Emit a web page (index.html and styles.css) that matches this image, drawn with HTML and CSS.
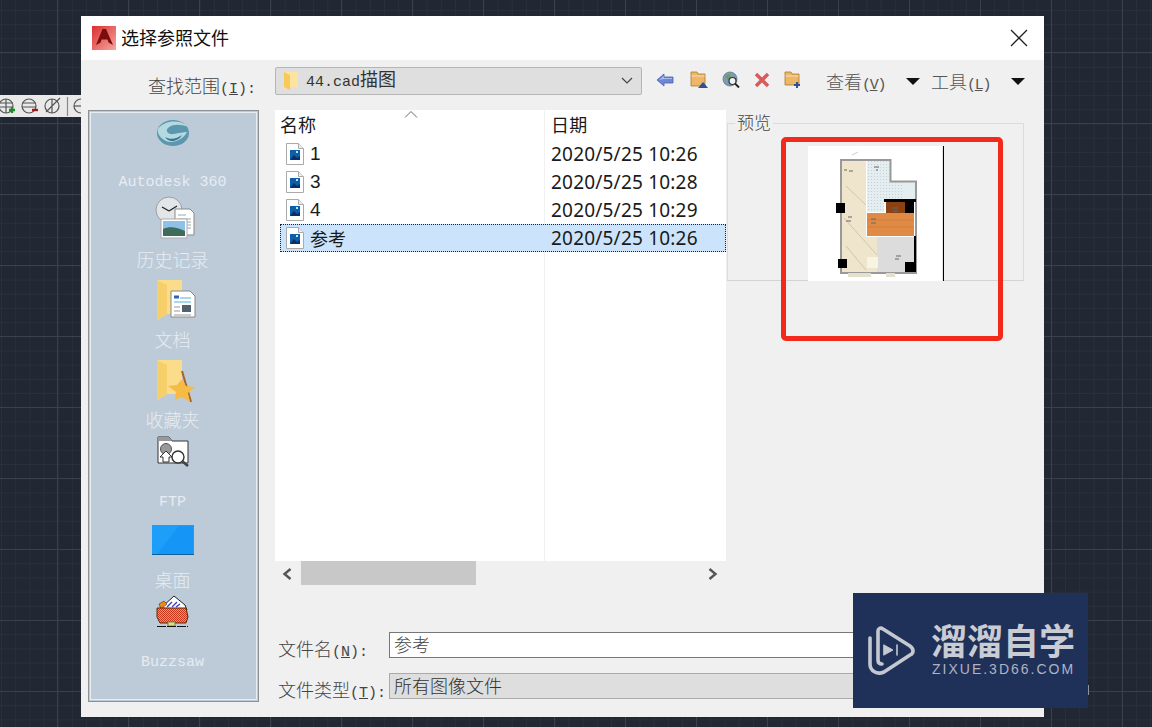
FILE: index.html
```html
<!DOCTYPE html>
<html lang="zh-CN">
<head>
    <meta charset="UTF-8">
    <meta name="viewport" content="width=device-width, initial-scale=1.0">
    <title>选择参照文件</title>
    <link rel="stylesheet" href="styles.css">
</head>
<body>
    <!-- CAD toolbar left behind the dialog -->
    <div class="cad-toolbar">
        <svg width="81" height="22" viewBox="0 0 81 22" fill="none" stroke="#555" stroke-width="1.2">
            <circle cx="6" cy="11" r="7"/><path d="M-1 8h14M-1 12h14M6 4v14"/>
            <path d="M9 15h6M12 12v6" stroke="#1a8a2a" stroke-width="2.4"/>
            <circle cx="29" cy="11" r="7"/><path d="M22 8h14M22 12h14"/>
            <path d="M32 15h6" stroke="#9c1c1c" stroke-width="2.4"/>
            <circle cx="52" cy="11" r="7"/><path d="M46 17L60 3M52 4v14"/>
            <path d="M67.500 2v19" stroke="#888"/>
            <circle cx="81" cy="11" r="7"/><path d="M74 11h7"/>
        </svg>
    </div>

    <div class="dialog">
        <div class="titlebar">
            <svg class="app-logo" width="24" height="24" viewBox="0 0 24 24">
                <defs>
                    <linearGradient id="logoBg" x1="0" y1="0" x2="1" y2="1">
                        <stop offset="0" stop-color="#d92f2f"/>
                        <stop offset="1" stop-color="#f7a7a0"/>
                    </linearGradient>
                </defs>
                <rect width="24" height="24" fill="url(#logoBg)"/>
                <path d="M4 19L10.500 3h3.500L21 19l-4.500-2.500-1-3h-6l-1 3z" fill="#7a0c0c"/>
            </svg>
            <span class="title-text">选择参照文件</span>
            <svg class="close-btn" width="18" height="18" viewBox="0 0 18 18" stroke="#222" stroke-width="1.3">
                <path d="M1 1l16 16M17 1L1 17"/>
            </svg>
        </div>

        <div class="location-row">
            <div class="field-label location-label">查找范围<span class="mono">(<u>I</u>):</span></div>
            <div class="combo">
                <svg width="16" height="20" viewBox="0 0 16 20">
                    <path d="M1 1h14v15H6l-5 3z" fill="#fde3a0"/>
                    <path d="M1 1l6 3v15l-6-3z" fill="#f8c95c"/>
                </svg>
                <span class="combo-text"><span class="mono">44.cad</span>描图</span>
                <svg class="combo-arrow" width="12" height="8" viewBox="0 0 12 8" fill="none" stroke="#444" stroke-width="1.2">
                    <path d="M1 1l5 5 5-5"/>
                </svg>
            </div>
            <div class="tool-icons">
                <svg width="18" height="16" viewBox="0 0 18 16">
                    <path d="M1 8l7-6v3h9v6H8v3z" fill="#6f86d6" stroke="#4a5fae" stroke-width=".8"/>
                    <path d="M3 8l5-4v2h8v1H8z" fill="#a9bcf0"/>
                </svg>
                <svg width="18" height="18" viewBox="0 0 18 18">
                    <path d="M1 1h6l1 2h7v12H1z" fill="#eeb768" stroke="#a8772e" stroke-width=".8"/>
                    <path d="M1.500 5h13" stroke="#f8dcae"/>
                    <path d="M8 17l5-6 5 6z" fill="#2f4f9c"/>
                </svg>
                <svg width="18" height="18" viewBox="0 0 18 18">
                    <circle cx="8" cy="8" r="7" fill="#7f9bb0" stroke="#5d7689" stroke-width=".8"/>
                    <path d="M3 5l4-2 2 3-3 3z" fill="#6f9a62"/>
                    <circle cx="10.500" cy="10" r="3.500" fill="#eef3f6" stroke="#333" stroke-width="1.2"/>
                    <path d="M13 12.500l4 4" stroke="#222" stroke-width="1.8"/>
                </svg>
                <svg width="16" height="16" viewBox="0 0 16 16" stroke="#d85a5a" stroke-width="3.400">
                    <path d="M2 2l12 12M14 2L2 14"/>
                </svg>
                <svg width="18" height="18" viewBox="0 0 18 18">
                    <path d="M1 1h6l1 2h7v11H1z" fill="#eeb768" stroke="#a8772e" stroke-width=".8"/>
                    <path d="M1.500 5h13" stroke="#f8dcae"/>
                    <path d="M13 11v6M10 14h6" stroke="#2f4f9c" stroke-width="2"/>
                </svg>
            </div>
            <div class="tool-menu">查看<span class="mono">(<u>V</u>)</span></div>
            <span class="menu-arrow arrow-view"></span>
            <div class="tool-menu">工具<span class="mono">(<u>L</u>)</span></div>
            <span class="menu-arrow arrow-tools"></span>
        </div>

        <div class="main">
            <div class="places">
                <div class="place">
                    <svg width="48" height="48" viewBox="0 0 48 48">
                        <ellipse cx="24" cy="18" rx="16" ry="13" fill="#5b97ad"/>
                        <path d="M9 14c6-9 23-10 30-2-7-3-16-3-20 1-3 3 0 7 6 6 5-1 9-2 13-2-4 8-15 12-21 9-6-3-9-8-8-12z" fill="#b4d9e1"/>
                        <path d="M16 22c5 3 12 2 17-2-3 6-13 9-17 2z" fill="#3a7390"/>
                    </svg>
                    <span class="place-label mono-label">Autodesk 360</span>
                </div>
                <div class="place">
                    <svg width="48" height="48" viewBox="0 0 48 48">
                        <circle cx="20" cy="15" r="13" fill="#e3e6e8" stroke="#9a9fa3"/>
                        <path d="M20 16l-7-4M20 16l8-5" stroke="#222" stroke-width="1.300"/>
                        <path d="M26 14h15l4 4v22H26z" fill="#fff" stroke="#888"/>
                        <path d="M29 20h8M29 24h13M38 27h4M38 30h4M38 33h4" stroke="#9aa"/>
                        <rect x="12" y="24" width="26" height="19" fill="#fff" stroke="#aaa"/>
                        <rect x="14" y="26" width="22" height="15" fill="#8dc1e8"/>
                        <path d="M14 34c6-3 14-2 22 2v5H14z" fill="#3f6b5c"/>
                    </svg>
                    <span class="place-label">历史记录</span>
                </div>
                <div class="place">
                    <svg width="48" height="48" viewBox="0 0 48 48">
                        <path d="M8 5h25v34H18L8 45z" fill="#fbdc8a"/>
                        <path d="M8 5l10 5v29L8 45z" fill="#f7cf6a"/>
                        <path d="M22 16h19l5 5v21H22z" fill="#fff" stroke="#888"/>
                        <path d="M25 22h5" stroke="#2a63b8" stroke-width="3"/>
                        <path d="M31 23h11M25 27h17" stroke="#4fb3d9"/>
                        <rect x="33" y="30" width="9" height="7" fill="#50626e"/>
                        <path d="M25 32h6M25 36h6M25 40h17" stroke="#999"/>
                    </svg>
                    <span class="place-label">文档</span>
                </div>
                <div class="place">
                    <svg width="48" height="48" viewBox="0 0 48 48">
                        <path d="M8 5h25v34H18L8 45z" fill="#fbdc8a"/>
                        <path d="M8 5l10 5v29L8 45z" fill="#f7cf6a"/>
                        <path d="M33 16l9 31" stroke="#a9602a" stroke-width="2"/>
                        <path d="M33 24l4 7 9 1-7 6 2 9-8-5-7 3 1-8-8-6 9-1z" fill="#f5bb45"/>
                    </svg>
                    <span class="place-label">收藏夹</span>
                </div>
                <div class="place">
                    <svg width="48" height="48" viewBox="0 0 48 48">
                        <path d="M9 2h11l3 4h16v22H9z" fill="#fff" stroke="#333"/>
                        <path d="M9 2h11l3 4H9z" fill="#999"/>
                        <circle cx="17" cy="14" r="5.500" fill="#999" stroke="#555"/>
                        <path d="M17 16l-6 6h3v5h6v-5h3z" fill="#fff" stroke="#333"/>
                        <circle cx="29" cy="22" r="6" fill="#fff" stroke="#333" stroke-width="1.400"/>
                        <path d="M33 26l6 5" stroke="#444" stroke-width="2.600"/>
                    </svg>
                    <span class="place-label mono-label">FTP</span>
                </div>
                <div class="place">
                    <svg width="48" height="48" viewBox="0 0 48 48">
                        <rect x="3" y="10" width="42" height="30" fill="#1d9ef8"/>
                        <path d="M8 39l22-28h14v28z" fill="#1596f6"/>
                        <path d="M3 39.500h42" stroke="#0a5f9e"/>
                    </svg>
                    <span class="place-label">桌面</span>
                </div>
                <div class="place">
                    <svg width="48" height="48" viewBox="0 0 48 48">
                        <defs>
                            <pattern id="checks" width="2" height="2" patternUnits="userSpaceOnUse">
                                <rect width="2" height="2" fill="#f0a71c"/>
                                <rect width="1" height="1" fill="#c9361a"/>
                                <rect x="1" y="1" width="1" height="1" fill="#c9361a"/>
                            </pattern>
                        </defs>
                        <path d="M12 13l13-12 11 9 2 5z" fill="#fff" stroke="#222"/>
                        <path d="M18 12l5-5M23 12l5-5M27 12l4-3" stroke="#3a3ac0" stroke-width="1.300"/>
                        <path d="M10 9l5-3 3 3-6 5z" fill="#e88a20" stroke="#5a2c00" stroke-width=".6"/>
                        <path d="M8 13h29l2 9-2 6H11l-3-6z" fill="url(#checks)" stroke="#5a2c00"/>
                        <path d="M19 27h7v4h-7z" fill="#e0dc78" stroke="#555" stroke-width=".6"/>
                        <path d="M8 31.500h31" stroke="#111" stroke-dasharray="9 1"/>
                    </svg>
                    <span class="place-label mono-label">Buzzsaw</span>
                </div>
            </div>

            <div class="content">
                <div class="browse">
                    <div class="files">
                        <div class="file-list">
                            <svg class="sort-mark" width="14" height="7" viewBox="0 0 14 7" fill="none" stroke="#666">
                                <path d="M1 6.500l6-6 6 6"/>
                            </svg>
                            <div class="file-row file-head">
                                <span class="col-name head-name">名称</span>
                                <span class="col-date">日期</span>
                            </div>
                            <div class="file-row">
                                <span class="col-name">
                                    <svg class="file-icon" width="18" height="22" viewBox="0 0 18 22"><use href="#fileIcon"/></svg>
                                    1
                                </span>
                                <span class="col-date">2020/5/25 10:26</span>
                            </div>
                            <div class="file-row">
                                <span class="col-name">
                                    <svg class="file-icon" width="18" height="22" viewBox="0 0 18 22"><use href="#fileIcon"/></svg>
                                    3
                                </span>
                                <span class="col-date">2020/5/25 10:28</span>
                            </div>
                            <div class="file-row">
                                <span class="col-name">
                                    <svg class="file-icon" width="18" height="22" viewBox="0 0 18 22"><use href="#fileIcon"/></svg>
                                    4
                                </span>
                                <span class="col-date">2020/5/25 10:29</span>
                            </div>
                            <div class="file-row selected">
                                <span class="col-name">
                                    <svg class="file-icon" width="18" height="22" viewBox="0 0 18 22"><use href="#fileIcon"/></svg>
                                    参考
                                </span>
                                <span class="col-date">2020/5/25 10:26</span>
                            </div>
                        </div>
                        <div class="scrollbar">
                            <svg class="scroll-arrow arrow-left" width="12" height="14" viewBox="0 0 12 14" fill="none" stroke="#555" stroke-width="2.400">
                                <path d="M9.500 2l-6 5 6 5"/>
                            </svg>
                            <div class="scroll-track"><div class="scroll-thumb"></div></div>
                            <svg class="scroll-arrow arrow-right" width="12" height="14" viewBox="0 0 12 14" fill="none" stroke="#555" stroke-width="2.400">
                                <path d="M2.500 2l6 5-6 5"/>
                            </svg>
                        </div>
                    </div>

                    <div class="preview">
                        <span class="preview-title">预览</span>
                        <div class="preview-image">
                            <svg width="136" height="135" viewBox="0 0 136 135">
                                <defs>
                                    <pattern id="tiles" width="3" height="3" patternUnits="userSpaceOnUse">
                                        <rect width="3" height="3" fill="#e4edf0"/>
                                        <rect width="1" height="1" fill="#c3d2d6"/>
                                    </pattern>
                                </defs>
                                <rect width="136" height="135" fill="#fff"/>
                                <path d="M135.500 0v135" stroke="#000" stroke-width="1.200"/>
                                <g class="plan">
                                    <path d="M44 9l6-3" stroke="#ccc"/>
                                    <path d="M34 15h24v76h11v35H34z" fill="#eee5cc"/>
                                    <path d="M38 40l20 19M36 72l33 37M38 100l20 24" stroke="#c6b99a" stroke-width=".7" fill="none"/>
                                    <path d="M59 15h23v21h25v18H76v12H59z" fill="#e4edf0"/>
                                    <path d="M59 15h23v21h12v18H76v12H59z" fill="url(#tiles)"/>
                                    <path d="M33 14h49.500v21.500H108V127H33z" fill="none" stroke="#999" stroke-width="2"/>
                                    <path d="M76 53h32v3H76z" fill="#000"/>
                                    <rect x="78" y="56" width="19" height="11" fill="#8a4212"/>
                                    <rect x="97" y="56" width="9" height="11" fill="#000"/>
                                    <rect x="59" y="67" width="47" height="23" fill="#df8b46"/>
                                    <path d="M59 74h47M59 81h47" stroke="#cf7a36" stroke-width=".7"/>
                                    <rect x="69" y="91" width="37" height="35" fill="#dcdcdc"/>
                                    <rect x="59" y="111" width="11" height="11" fill="#f8f4e2"/>
                                    <path d="M106 90h2v26h-2z" fill="#000"/>
                                    <rect x="28" y="57" width="9" height="10" fill="#000"/>
                                    <rect x="30" y="113" width="9" height="9" fill="#000"/>
                                    <rect x="97" y="116" width="11" height="10" fill="#000"/>
                                    <rect x="40" y="127" width="23" height="4" fill="#e3e0cc"/>
                                    <rect x="78" y="127" width="9" height="4" fill="#e3e0cc"/>
                                    <path d="M36 24h3M41 25h4M66 21h5M68 24h2M40 71h4M38 75h5M63 73h5M63 77h5M84 62h6M85 65h5M88 110h5M87 113h4" stroke="#666" stroke-width="1"/>
                                </g>
                            </svg>
                        </div>
                    </div>
                </div>

                <div class="form-row name-row">
                    <div class="field-label form-label">文件名<span class="mono">(<u>N</u>):</span></div>
                    <div class="text-input">参考</div>
                </div>
                <div class="form-row type-row">
                    <div class="field-label form-label">文件类型<span class="mono">(<u>T</u>):</span></div>
                    <div class="type-select">所有图像文件</div>
                </div>
            </div>
        </div>

        <div class="red-mark"></div>
    </div>

    <span class="hidden-edge"></span>

    <!-- watermark -->
    <div class="watermark">
        <svg width="48" height="50" viewBox="0 0 48 50" fill="none" stroke="#c4c8d0" stroke-width="3.600" stroke-linecap="round" stroke-linejoin="round">
            <path d="M3 12V38c0 7 7 11 14 8L43 29c4-2 4-6 0-9L16 3c-3-2-5 0-5 2V34c0 3 2 4 4 4"/>
            <path d="M17 19l9 5-9 5z" fill="#c4c8d0" stroke-width="1"/>
            <path d="M30 19v10" stroke-width="1.600"/>
        </svg>
        <div class="watermark-text">
            <div class="watermark-name">溜溜自学</div>
            <div class="watermark-url">ZIXUE.3D66.COM</div>
        </div>
    </div>

    <svg class="icon-defs" width="0" height="0">
        <symbol id="fileIcon" viewBox="0 0 18 22">
            <path d="M.5.500h12l5 5v16H.5z" fill="#fff" stroke="#aaa"/>
            <path d="M12.500.500v5h5" fill="#eee" stroke="#aaa"/>
            <rect x="4" y="7" width="10" height="10" fill="#0f5ea8"/>
            <path d="M4 17l4-5 3 3 3-2v4z" fill="#0b2f66"/>
            <rect x="10" y="8" width="2" height="2" fill="#bfe2fb"/>
        </symbol>
    </svg>
</body>
</html>
```

FILE: styles.css
```css
* {
    box-sizing: border-box;
}
body {
    margin: 0;
    height: 727px;
    overflow: hidden;
    position: relative;
    font-family: "Liberation Sans", "Noto Sans CJK SC", sans-serif;
    background-color: #222833;
    background-image:
        linear-gradient(#3a414c 1px, transparent 1px),
        linear-gradient(90deg, #3a414c 1px, transparent 1px),
        linear-gradient(#2a303b 1px, transparent 1px),
        linear-gradient(90deg, #2a303b 1px, transparent 1px);
    background-size: 71px 71px, 71px 71px, 14.2px 14.2px, 14.2px 14.2px;
    background-position: 0 52px, 57px 0, 0 10px, 1px 0;
}
.cad-toolbar {
    position: absolute;
    left: 0;
    top: 95px;
    width: 81px;
    height: 22px;
    background: #e9e9e9;
}
.cad-toolbar svg {
    display: block;
}
.dialog {
    position: absolute;
    left: 81px;
    top: 16px;
    width: 963px;
    height: 701px;
    background: #f0f0f0;
}
.titlebar {
    height: 44px;
    background: white;
    display: flex;
    align-items: center;
    padding-left: 11px;
}
.app-logo {
    margin-right: 5px;
}
.title-text {
    font-size: 18px;
    color: #111;
    margin-top: -2px;
}
.close-btn {
    margin-left: auto;
    margin-right: 16px;
}

/* shared label text */
.field-label {
    font-family: "Noto Sans CJK SC", sans-serif;
    font-size: 18px;
    font-weight: 300;
    color: #444;
    white-space: nowrap;
}
.mono {
    font-family: "Liberation Mono", monospace;
    font-size: 15px;
}

.location-row {
    display: flex;
    align-items: center;
    height: 28px;
    margin-top: 7px;
}
.location-label {
    width: 175px;
    text-align: right;
    margin-top: 8px;
}
.combo {
    width: 367px;
    height: 28px;
    margin-left: 19px;
    padding: 0 8px 0 7px;
    display: flex;
    align-items: center;
    gap: 7px;
    background: #dfdfdf;
    border: 1px solid #b5b5b5;
    border-radius: 2px;
    font-family: "Noto Sans CJK SC", sans-serif;
    font-size: 18px;
    color: #333;
}
.combo-text {
    line-height: 24px;
    margin-top: -2px;
}
.combo-arrow {
    margin-left: auto;
}
.tool-icons {
    display: flex;
    align-items: center;
    gap: 14px;
    margin: -3px 0 0 14px;
    width: 170px;
}
.tool-icons svg:nth-child(2) {
    margin-left: 2px;
}
.tool-menu {
    font-family: "Noto Sans CJK SC", sans-serif;
    font-size: 18px;
    font-weight: 300;
    color: #555;
    white-space: nowrap;
    margin-top: -1px;
}
.tool-menu .mono {
    letter-spacing: -1.300px;
}
.menu-arrow {
    width: 0;
    height: 0;
    border-left: 7px solid transparent;
    border-right: 7px solid transparent;
    border-top: 7px solid #111;
}
.arrow-view {
    margin: 0 11px 0 21px;
}
.arrow-tools {
    margin-left: 21px;
}

.main {
    display: flex;
    margin-top: 15px;
    padding-left: 7px;
}
.places {
    width: 171px;
    height: 592px;
    padding-right: 2px;
    background: #bdcbd9;
    outline: 1px solid #8b9196;
    outline-offset: -1px;
    border: 2px solid transparent;
    box-shadow: inset 0 0 0 1px #e8edf2;
}
.place {
    height: 80px;
    display: flex;
    flex-direction: column;
    align-items: center;
}
.places .place:first-child {
    height: 78px;
}
.places .place svg {
    margin-top: 5px;
    flex: none;
}
.places .place:first-child svg {
    margin-top: 3px;
}
.place-label {
    height: 20px;
    line-height: 20px;
    margin-top: 6px;
    font-family: "Noto Sans CJK SC", sans-serif;
    font-size: 18px;
    font-weight: 300;
    color: #e6ecf2;
    white-space: nowrap;
}
.place .mono-label {
    margin-top: 10px;
    font-family: "Liberation Mono", monospace;
    font-size: 15px;
}

.content {
    margin-left: 16px;
    flex: 1;
}
.browse {
    display: flex;
    align-items: flex-start;
}
.files {
    width: 451px;
}
.file-list {
    position: relative;
    height: 451px;
    background: white;
    padding-top: 2px;
    background-image: linear-gradient(#f1f1f1, #f1f1f1);
    background-size: 1px 100%;
    background-position: 269px 0;
    background-repeat: no-repeat;
}
.sort-mark {
    position: absolute;
    left: 129px;
    top: 1px;
}
.file-row {
    display: flex;
    height: 28px;
    align-items: center;
    font-size: 19px;
    color: #1a1a1a;
    white-space: nowrap;
}
.col-name {
    width: 276px;
    padding-left: 11px;
    display: flex;
    align-items: center;
    gap: 6px;
}
.col-date {
    font-family: "Noto Sans", "Noto Sans CJK SC", sans-serif;
    letter-spacing: .2px;
}
.file-head {
    font-size: 18px;
    padding-bottom: 4px;
}
.head-name {
    padding-left: 5px;
}
.selected {
    margin-left: 5px;
    background: #cce4fb;
    outline: 1px dotted #222;
    outline-offset: -1px;
}
.selected .col-name {
    width: 271px;
    padding-left: 6px;
    font-size: 18px;
}
.file-icon {
    flex: none;
}
.scrollbar {
    height: 25px;
    display: flex;
    align-items: center;
}
.scroll-arrow {
    flex: none;
}
.arrow-left {
    margin: 0 8px 0 6px;
}
.arrow-right {
    margin: 0 7px 0 6px;
}
.scroll-track {
    flex: 1;
    height: 24px;
    align-self: flex-start;
}
.scroll-thumb {
    width: 175px;
    height: 100%;
    background: #c8c8c8;
}

.preview {
    position: relative;
    width: 297px;
    height: 158px;
    margin: 13px 0 0 1px;
    border: 1px solid #dcdcdc;
    border-bottom-color: #d4d4d4;
}
.preview-title {
    position: absolute;
    left: 7px;
    top: -13px;
    padding: 0 2px;
    background: #f0f0f0;
    font-family: "Noto Sans CJK SC", sans-serif;
    font-size: 17px;
    font-weight: 300;
    line-height: 22px;
    color: #444;
}
.preview-image {
    width: 136px;
    height: 135px;
    margin: 22px 0 0 80px;
}
.preview-image svg {
    display: block;
}
.plan {
    filter: blur(.4px);
}

.form-row {
    display: flex;
    align-items: flex-start;
}
.name-row {
    margin-top: 46px;
}
.type-row {
    margin-top: 8px;
}
.form-label {
    width: 114px;
    padding-left: 3px;
    line-height: 24px;
    margin-top: 4px;
}
.text-input,
.type-select {
    width: 530px;
    height: 26px;
    padding-left: 4px;
    font-family: "Noto Sans CJK SC", sans-serif;
    font-size: 18px;
    font-weight: 300;
    line-height: 22px;
    color: #444;
}
.text-input {
    background: white;
    border: 1px solid #777;
}
.type-select {
    background: #dedede;
    border: 1px solid #aaa;
    color: #333;
}

/* hand drawn highlight on the screenshot */
.red-mark {
    position: absolute;
    left: 700px;
    top: 121px;
    width: 222px;
    height: 204px;
    border: 5px solid #f12a1c;
    border-radius: 5px;
}

.hidden-edge {
    position: absolute;
    left: 1088px;
    top: 685px;
    width: 1px;
    height: 10px;
    background: #8d93a0;
}
.watermark {
    position: absolute;
    left: 853px;
    top: 593px;
    width: 235px;
    height: 115px;
    background: #1f3059;
    display: flex;
    align-items: center;
    padding-left: 14px;
}
.watermark-text {
    margin: -5px 0 0 17px;
}
.watermark-name {
    font-family: "Noto Sans CJK SC", sans-serif;
    font-size: 36px;
    font-weight: 700;
    line-height: 40px;
    margin-left: -1px;
    color: #c9ccd2;
}
.watermark-url {
    font-family: "Liberation Sans", sans-serif;
    font-size: 14px;
    letter-spacing: 2px;
    line-height: 18px;
    margin-top: 1px;
    white-space: nowrap;
    color: #aeb4c4;
}
.icon-defs {
    position: absolute;
}
```
